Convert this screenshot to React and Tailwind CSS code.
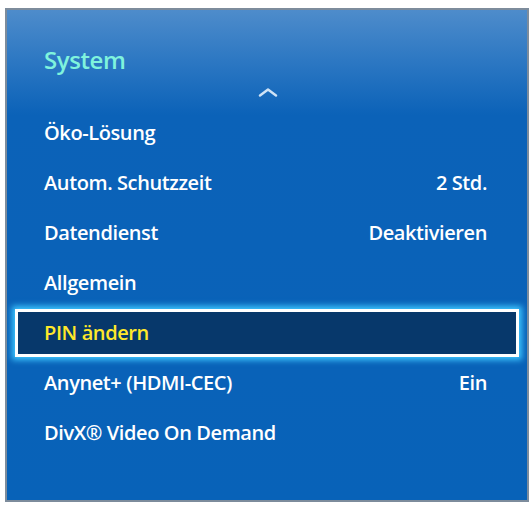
export default function App() {
  const rows = [
    ["Öko-Lösung", ""],
    ["Autom. Schutzzeit", "2 Std."],
    ["Datendienst", "Deaktivieren"],
    ["Allgemein", ""],
    ["PIN ändern", "", true],
    ["Anynet+ (HDMI-CEC)", "Ein"],
    ["DivX® Video On Demand", ""],
  ];
  return (
    <div className="w-[532px] h-[506px] bg-white pt-[8px] pl-[5px]" style={{ fontFamily: '"Open Sans", "Noto Sans", sans-serif' }}>
      <div className="w-[524px] h-[494px] border-2 border-[#7d8c9c] bg-[linear-gradient(180deg,#4e8ccb_0px,#2d78c3_50px,#0b62b8_105px,#0862b8_100%)] flex flex-col">
        <div className="h-[73px] pl-[37px] pt-[38px] text-[24px] font-semibold leading-none text-[#7ff3dd] tracking-[-0.4px]">System</div>
        <div className="flex justify-start pl-[251px] h-[27px] pt-[5px]">
          <svg width="20" height="9" viewBox="0 0 20 9">
            <path d="M2 7.5 L10 1.5 L18 7.5" fill="none" stroke="#cfe3f6" strokeWidth="2.4" strokeLinecap="round" strokeLinejoin="round" />
          </svg>
        </div>
        <div className="flex flex-col mt-[-2px]">
          {rows.map(([l, r, sel], i) => (
            <div key={i} className={"h-[50px] flex items-center " + (sel ? "px-[8px]" : "")}>
              {sel ? (
                <div className="w-full h-[48px] border-[3px] border-white bg-[#07386b] shadow-[0_0_6px_3px_#3ec6ff] flex items-center pl-[26px]">
                  <span className="text-[20px] font-semibold text-[#ffe82a] tracking-[-0.4px]">{l}</span>
                </div>
              ) : (
                <div className="w-full flex justify-between pl-[37px] pr-[40px] text-[20px] font-semibold text-white tracking-[-0.4px]">
                  <span>{l}</span>
                  <span>{r}</span>
                </div>
              )}
            </div>
          ))}
        </div>
      </div>
    </div>
  );
}
